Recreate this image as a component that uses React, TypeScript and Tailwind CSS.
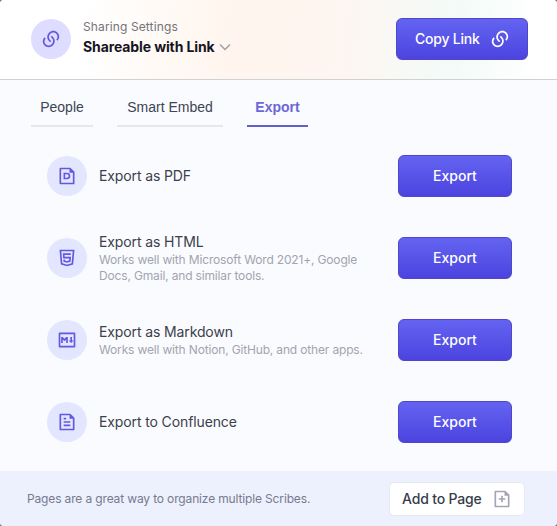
import type { ReactNode } from "react";
import { RiLinksLine, RiMarkdownLine } from "react-icons/ri";

const SHEET =
  "M15 4H5v16h14V8h-4V4zM3 2.992C3 2.444 3.447 2 3.999 2H16l5 5v13.993A1 1 0 0 1 20.007 22H3.993A1 1 0 0 1 3 21.008V2.992z";

function FileIcon({ mark, className }: { mark: string; className: string }) {
  return (
    <svg viewBox="0 0 24 24" fill="currentColor" fillRule="evenodd" className={className}>
      <path d={SHEET} />
      <path d={mark} />
    </svg>
  );
}

function HtmlIcon() {
  return (
    <svg viewBox="0 0 24 24" fill="none" stroke="currentColor" strokeWidth="2" className="size-5">
      <path d="M4.1 3h15.8l-1.4 16L12 21l-6.500-2L4.100 3z" />
      <path d="M16.600 7.300H8l.3 4.200h7.500l-.4 4.300-3.400 1-3.400-1-.1-1.800" />
    </svg>
  );
}

function ExportRow({ icon, title, note }: { icon: ReactNode; title: string; note?: ReactNode }) {
  return (
    <li className="flex h-[82px] items-center">
      <span className="flex size-10 shrink-0 items-center justify-center rounded-full bg-[#e2e6ff] text-[#6558e0]">
        {icon}
      </span>
      <div className="ml-3 grow">
        <h3 className="text-sm leading-5 tracking-[-0.12px] whitespace-nowrap text-[#3c404b]">{title}</h3>
        {note && (
          <p className="text-xs leading-4 tracking-[-0.16px] whitespace-nowrap text-[#a2a4ae]">{note}</p>
        )}
      </div>
      <button className="h-[42px] w-[114px] shrink-0 rounded-md border border-[#5146c9] bg-linear-to-b from-[#6463f1] to-[#4c43df] text-sm font-medium text-white">
        Export
      </button>
    </li>
  );
}

export default function App() {
  return (
    <div className="h-[526px] w-[557px] bg-[#77777f] font-['Inter',sans-serif]">
      <main className="flex h-full flex-col overflow-hidden rounded-[4px] bg-[#fafbff]">
        <header className="flex h-20 shrink-0 items-center border-b border-[#cfd1d3] bg-[linear-gradient(94deg,#fff_15%,#fffaf6_28%,#fff5ee_42%,#fef5f0_58%,#fbf7f3_66%,#f3fbf8_82%,#fff_96%)] pr-[29px] pb-px pl-[31px]">
          <span className="flex size-10 items-center justify-center rounded-full bg-[#dedcff] text-[#6558e0]">
            <RiLinksLine className="size-5" />
          </span>
          <div className="ml-3 grow pb-1">
            <p className="text-xs leading-5 tracking-[0.12px] text-[#737378]">Sharing Settings</p>
            <h1 className="flex items-center text-sm leading-5 font-bold tracking-[-0.11px] text-[#16151f]">
              Shareable with Link
              <svg viewBox="0 0 12 8" fill="none" stroke="#a0a0aa" strokeWidth="1.5" className="ml-1 h-2 w-3">
                <path d="M1 1.500l5 5 5-5" />
              </svg>
            </h1>
          </div>
          <button className="flex h-[42px] w-[132px] items-center rounded-md border border-[#5146c9] bg-linear-to-b from-[#6463f1] to-[#4c43df] pl-[18px] text-sm font-medium tracking-[-0.22px] text-white">
            Copy Link
            <RiLinksLine className="mr-[17px] ml-auto size-5" />
          </button>
        </header>

        <nav className="flex h-[47px] shrink-0 gap-6 pl-[31px] font-['Liberation_Sans',sans-serif] text-sm text-[#3d4453]">
          <a className="w-[62px] border-b-2 border-[#e5e7eb] pt-[17px] text-center leading-5">People</a>
          <a className="w-[106px] border-b-2 border-[#e5e7eb] pt-[17px] text-center leading-5">Smart Embed</a>
          <a className="w-[61px] border-b-2 border-[#6360c8] pt-[17px] text-center leading-5 font-bold text-[#6b67d8]">
            Export
          </a>
        </nav>

        <ul className="grow pt-2 pr-[45px] pl-[47px]">
          <ExportRow
            title="Export as PDF"
            icon={
              <FileIcon
                className="size-5"
                mark="M7.800 8H12a4 4 0 0 1 0 8H7.800V8zM9.800 10v4H12a2 2 0 0 0 0-4H9.800z"
              />
            }
          />
          <ExportRow
            title="Export as HTML"
            note={
              <>
                Works well with Microsoft Word 2021+, Google
                <br />
                Docs, Gmail, and similar tools.
              </>
            }
            icon={<HtmlIcon />}
          />
          <ExportRow
            title="Export as Markdown"
            note="Works well with Notion, GitHub, and other apps."
            icon={<RiMarkdownLine className="size-5" />}
          />
          <ExportRow
            title="Export to Confluence"
            icon={<FileIcon className="size-5" mark="M8 7h3v2H8V7zm0 4h8v2H8v-2zm0 4h8v2H8v-2z" />}
          />
        </ul>

        <footer className="flex h-[55px] shrink-0 items-center bg-[#edf0fd] pr-8 pl-[27px]">
          <p className="grow text-xs tracking-[-0.145px] text-[#777b8e]">
            Pages are a great way to organize multiple Scribes.
          </p>
          <button className="flex h-[34px] w-[136px] items-center rounded-[5px] border border-[#e6e8f2] bg-white pl-3 text-sm font-medium tracking-[-0.17px] text-[#373d4c]">
            Add to Page
            <FileIcon
              className="mr-[12px] ml-auto size-5 text-[#a7a2b5]"
              mark="M11 11V8h2v3h3v2h-3v3h-2v-3H8v-2h3z"
            />
          </button>
        </footer>
      </main>
    </div>
  );
}
